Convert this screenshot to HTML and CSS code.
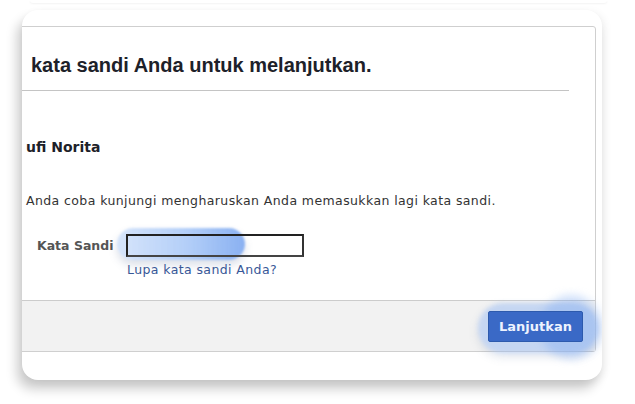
FILE: index.html
```html
<!DOCTYPE html>
<html lang="id">
<head>
<meta charset="utf-8">
<title>Masukkan kata sandi</title>
<link rel="stylesheet" href="styles.css">
</head>
<body>
<div class="prev-card"></div>
<div class="card">
  <div class="panel">
    <div class="panel-head">
      <h1 class="title">kata sandi Anda untuk melanjutkan.</h1>
    </div>
    <div class="panel-body">
      <div class="name">ufi Norita</div>
      <p class="info">Anda coba kunjungi mengharuskan Anda memasukkan lagi kata sandi.</p>
      <div class="field">
        <label class="label" for="pw">Kata Sandi</label>
        <div class="input-wrap">
          <span class="glow-input"></span>
          <input id="pw" class="input" type="password">
        </div>
        <span></span>
        <a class="link" href="#">Lupa kata sandi Anda?</a>
      </div>
    </div>
    <div class="panel-foot">
      <div class="btn-wrap">
        <span class="glow-btn"></span>
        <span class="glow-btn-ring"></span>
        <button class="btn" type="button">Lanjutkan</button>
      </div>
    </div>
  </div>
</div>
</body>
</html>
```

FILE: styles.css
```css
html, body {
  margin: 0;
  padding: 0;
  background: #ffffff;
}
body {
  width: 635px;
  height: 404px;
  overflow: hidden;
  font-family: "DejaVu Sans", "Liberation Sans", sans-serif;
}
.prev-card {
  height: 3px;
  margin: 0 28px 0 30px;
  border-radius: 0 0 10px 10px;
  box-shadow: 0 1px 2px rgba(0,0,0,0.05);
  background: #fff;
}
.card {
  margin: 7px 0 0 22px;
  width: 580px;
  height: 370px;
  border-radius: 16px;
  background: #fff;
  box-shadow: -5px 9px 12px rgba(0,0,0,0.20), 3px 2px 8px rgba(0,0,0,0.06);
  overflow: hidden;
  padding-top: 16px;
  box-sizing: border-box;
}
.panel {
  margin-left: -10px;
  width: 584px;
  border: 1px solid #cfcfcf;
  border-radius: 3px;
  box-sizing: border-box;
  background: #fff;
}
.panel-head {
  margin-right: 26px;
  border-bottom: 1px solid #c4c4c4;
}
.title {
  margin: 0;
  padding: 26px 0 13px 18px;
  font-family: "Liberation Sans", Arial, sans-serif;
  font-size: 20px;
  line-height: 24px;
  font-weight: bold;
  color: #1d2129;
}
.panel-body {
  padding: 47px 0 22px 13px;
}
.name {
  font-size: 14px;
  line-height: 18px;
  font-weight: bold;
  color: #1d2129;
}
.info {
  margin: 37px 0 0 0;
  font-size: 12.5px;
  letter-spacing: 0.4px;
  line-height: 16px;
  color: #333;
}
.field {
  margin: 25px 0 0 11px;
  display: grid;
  grid-template-columns: 89px 178px;
  row-gap: 5px;
  align-items: center;
}
.label {
  font-size: 12.5px;
  font-weight: bold;
  color: #555;
}
.input-wrap {
  position: relative;
  height: 23px;
}
.input {
  position: relative;
  z-index: 1;
  display: block;
  width: 178px;
  height: 23px;
  box-sizing: border-box;
  margin: 0;
  border: 2px solid #222;
  border-right-color: #333;
  border-bottom-color: #444;
  background: transparent;
  outline: none;
}
.glow-input {
  position: absolute;
  left: -9px;
  top: -6px;
  width: 128px;
  height: 32px;
  border-radius: 16px;
  background: linear-gradient(90deg, rgba(210,226,250,0.9) 0%, rgba(175,204,248,0.95) 55%, rgba(125,168,240,0.9) 100%);
  box-shadow: 0 5px 8px rgba(90,110,150,0.22);
  filter: blur(1px);
}
.link {
  font-size: 12.5px;
  letter-spacing: 0.4px;
  line-height: 16px;
  color: #385898;
  text-decoration: none;
  margin-left: 1px;
}
.panel-foot {
  border-top: 1px solid #cccccc;
  background: #f2f2f2;
  height: 51px;
  padding: 10px 12px 0 0;
  box-sizing: border-box;
  display: flex;
  justify-content: flex-end;
  align-items: flex-start;
}
.btn-wrap {
  position: relative;
}
.glow-btn {
  position: absolute;
  left: -10px;
  top: -8px;
  width: 120px;
  height: 50px;
  border-radius: 25px;
  background: rgba(160,192,242,0.55);
  box-shadow: 0 4px 8px rgba(90,110,150,0.18);
  filter: blur(2px);
}
.glow-btn-ring {
  position: absolute;
  left: 52px;
  top: -16px;
  width: 62px;
  height: 64px;
  border-radius: 50%;
  background: rgba(120,165,240,0.35);
  filter: blur(4px);
}
.btn {
  position: relative;
  z-index: 1;
  display: block;
  width: 95px;
  height: 31px;
  margin: 0;
  padding: 0;
  border: 1px solid #2d5aad;
  border-radius: 2px;
  background: #3a69c6;
  color: #eef3ff;
  font-family: "DejaVu Sans", sans-serif;
  font-size: 13px;
  font-weight: bold;
}
```
